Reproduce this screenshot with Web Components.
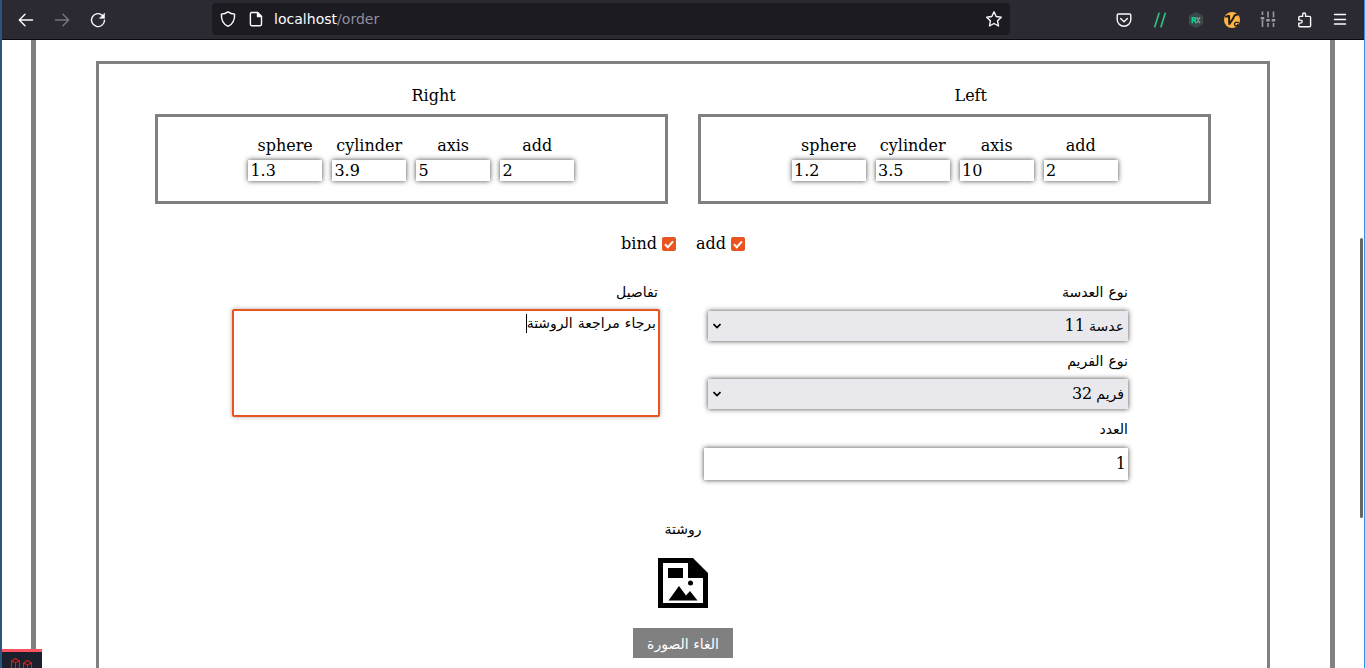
<!DOCTYPE html>
<html lang="ar">
<head>
<meta charset="utf-8">
<title>Order</title>
<style>
html,body{margin:0;height:100%;overflow:hidden;background:#fff}
body{font:16px/19px "DejaVu Serif","DejaVu Sans",serif;color:#000;--ar:14px/19px "DejaVu Sans",sans-serif;--shadow:0 0 5px #444}
</style>
</head>
<body>
<order-window></order-window>
<script>
function define(name, html) {
  const t = document.createElement('template');
  t.innerHTML = html;
  customElements.define(name, class extends HTMLElement {
    constructor() {
      super();
      this.attachShadow({mode: 'open'}).append(t.content.cloneNode(true));
    }
  });
}

define('browser-bar', `
<style>
:host{display:flex;box-sizing:border-box;height:40px;background:#2b2a33;border-bottom:1px solid #0c0c0d;align-items:center;color:#fbfbfe;font:14.05px/20px "DejaVu Sans",sans-serif;padding:0 14px 0 14px}
svg{display:block;flex:none;fill:none;stroke:#fbfbfe;stroke-width:1.4;stroke-linecap:round;stroke-linejoin:round}
.nav{display:flex;gap:16px;width:196px}
.url{display:flex;align-items:center;box-sizing:border-box;width:798px;height:32px;border-radius:4px;background:#1c1b22;padding:0 6px;margin-top:-1px}
.url svg+svg{margin-left:8px}
.url span{margin-left:8px;flex:1;white-space:nowrap}
i{font-style:normal;color:#8f8f9d}
.ext{display:flex;gap:16px;margin-left:auto}
</style>
<div class="nav">
<svg width="20" height="20" viewBox="0 0 20 20"><path d="M16.500 10H3.500M9 4.300L3.300 10 9 15.700"/></svg>
<svg width="20" height="20" viewBox="0 0 20 20" style="stroke:#77767f"><path d="M3.500 10h13M11 4.300l5.700 5.700-5.700 5.700"/></svg>
<svg width="20" height="20" viewBox="0 0 20 20"><path d="M16.500 10.200a6.500 6.500 0 1 1-2-4.800"/><path d="M16.500 3.500v4.800h-4.800z" fill="#fbfbfe" stroke-width=".6"/></svg>
</div>
<div class="url">
<svg width="20" height="20" viewBox="0 0 20 20"><path d="M10 2.800c2.200 1.500 4.200 2.100 6.600 2.300.3 5.500-1.600 10-6.600 12.300C5 15.100 3.100 10.600 3.400 5.100 5.800 4.900 7.800 4.300 10 2.800z"/></svg>
<svg width="20" height="20" viewBox="0 0 20 20"><path d="M5.700 3.500h5.800l4 4v7.800q0 1.400-1.400 1.400H5.700q-1.300 0-1.300-1.400V4.900q0-1.400 1.300-1.400z"/><path d="M11.500 3.500v4h4z" fill="#fbfbfe"/></svg>
<span>localhost<i>/order</i></span>
<svg width="20" height="20" viewBox="0 0 20 20"><path d="M10 2.800l2.200 4.700 5.100.7-3.700 3.600.9 5.200-4.500-2.500L5.500 17l.9-5.200-3.700-3.600 5.100-.7z"/></svg>
</div>
<div class="ext">
<svg width="20" height="20" viewBox="0 0 20 20"><path d="M4.500 4h11q1.300 0 1.300 1.300v4.200a6.800 6.800 0 0 1-13.600 0V5.300Q3.200 4 4.500 4z"/><path d="M6.600 8.500L10 11.700l3.400-3.200"/></svg>
<svg width="20" height="20" viewBox="0 0 20 20" style="stroke:#2dc77d;stroke-width:1.600"><path d="M9 3.200L4.800 16.800M15.200 3.200L11 16.800"/></svg>
<svg width="20" height="20" viewBox="0 0 20 20"><path d="M10 2.500l6.600 3.700v7.600L10 17.500l-6.600-3.700V6.200z" fill="#3a4745" stroke="#46514f" stroke-width=".8"/><g stroke-width="1.400"><path d="M6.200 12.700V7.700h2.100q1.400 0 1.400 1.300t-1.400 1.300H6.200M8.300 10.300l1.500 2.400" stroke="#00d9a0"/><path d="M10.800 7.700l2.900 5M13.700 7.700l-2.900 5" stroke="#819b98"/></g></svg>
<svg width="20" height="20" viewBox="0 0 20 20"><circle cx="10" cy="10" r="8" fill="#ffb444" stroke="none"/><path d="M4 6.600l3-.9.300 8.300Q11 9.500 12.800 5.200l2.700-.6" stroke="#24201b" stroke-width="2"/><path d="M16.400 12.700q-3.400-1.500-4 1.300.1 2 2.200 2 1.500 0 1-1.400" stroke="#24201b" stroke-width="1.300"/></svg>
<svg width="20" height="20" viewBox="0 0 20 20" style="stroke:#9b9aa0;stroke-width:1.600;stroke-linecap:butt"><path d="M4.500 1.500v3.500M4.500 10v7M10 1.500v6M10 13v4M15.500 1.500v6M15.500 13v4"/><path d="M2.700 8.200h3.600M8.200 10.200h3.600M13.700 10.200h3.600" stroke-width="2.600"/></svg>
<svg width="20" height="20" viewBox="0 0 20 20"><path d="M4.800 7.500q0-1.100 1.100-1.100h2.700V4.700q0-1.700 1.500-1.700t1.500 1.700v1.700h3.800q1.200 0 1.200 1.200v8.100q0 1.100-1.200 1.100H5.900q-1.100 0-1.100-1.100v-2.600h1.800q1.600-.1 1.600-1.500t-1.600-1.500H4.800z"/></svg>
<svg width="20" height="20" viewBox="0 0 20 20"><path d="M4.500 4.500h11M4.500 9.500h11M4.500 14h11"/></svg>
</div>`);

define('rx-field', `
<style>
:host{display:block;width:74.5px;text-align:center;white-space:nowrap}
.v{box-sizing:border-box;height:21px;margin-top:5px;padding-left:2.500px;text-align:left;line-height:21px;box-shadow:var(--shadow);background:#fff}
</style>
<div><slot name="label"></slot></div><div class="v"><slot></slot></div>`);

define('eye-panel', `
<style>
:host{display:block;width:513px}
.t{padding-left:50%;height:19px}
.b{box-sizing:border-box;height:90px;margin-top:9px;border:3px solid gray;padding:19px 0 0 var(--inset,89.9px);display:flex;gap:9.5px}
</style>
<div class="t"><slot name="title"></slot></div><div class="b"><slot></slot></div>`);

define('check-item', `
<style>
:host{display:flex;align-items:center;gap:5px}
svg{display:block;margin-top:1px}
</style>
<slot></slot><svg width="14" height="14" viewBox="0 0 14 14"><rect width="14" height="14" rx="2" fill="#e95420"/><path d="M3 7.300l2.800 2.900L11 4.300" fill="none" stroke="#fff" stroke-width="2"/></svg>`);

define('form-label', `
<style>:host{display:block;direction:rtl;font:var(--ar);word-spacing:.6px;height:19px;white-space:nowrap}</style><slot></slot>`);

define('select-box', `
<style>
:host{display:flex;direction:rtl;align-items:center;justify-content:space-between;box-sizing:border-box;width:420px;height:30px;background:#e9e9ed;box-shadow:var(--shadow);padding:0 4px 0 5px;margin-left:4px}
.a{font:var(--ar)}
.s{word-spacing:-1px}
</style>
<span class="s"><span class="a"><slot></slot></span> <slot name="n"></slot></span><svg width="8" height="6" viewBox="0 0 8 6"><path d="M.5 1L4 4.500 7.500 1" fill="none" stroke="#000" stroke-width="1.700"/></svg>`);

define('number-box', `
<style>:host{display:block;box-sizing:border-box;direction:rtl;height:32px;line-height:31px;background:#fff;box-shadow:var(--shadow);padding-right:2px}</style><slot></slot>`);

define('note-box', `
<style>
:host{display:flex;direction:rtl;box-sizing:border-box;width:428px;height:108px;border:2px solid #e95420;border-radius:2px;background:#fff;box-shadow:0 0 4px #aaa;padding:2px 2px}
span{height:19px;margin-top:1px;font:var(--ar);word-spacing:.6px;white-space:nowrap;border-left:1px solid #000}
</style>
<span><slot></slot></span>`);

define('image-upload', `
<style>
:host{display:flex;flex-direction:column;align-items:center}
svg{display:block;margin-top:19px}
.btn{width:100px;height:30px;margin-top:20px;background:gray;color:#fff;text-align:center;font:var(--ar);line-height:33px;direction:rtl;white-space:nowrap}
</style>
<form-label><slot name="label"></slot></form-label>
<svg width="50" height="50" viewBox="0 0 50 50"><path fill-rule="evenodd" d="M0 0h35l15 15v35H0zM5 5v40h40V20H30V5z"/><path d="M10 10h15v10H10zM10.500 42.500L21 28l7 9.500 4-4.500 7.500 9.500z"/><circle cx="32.500" cy="25" r="2.500"/></svg>
<div class="btn"><slot></slot></div>`);

define('devtools-tab', `
<style>
:host{position:absolute;left:0;bottom:0;width:40px;height:19px;box-sizing:border-box;border-top:3px solid #f85362;background:#1a202c}
svg{display:block}
</style>
<svg width="40" height="16" viewBox="0 0 40 16" fill="none" stroke="#c8231d" stroke-width="1.100"><path d="M9.500 9l4-2.500 4 2.500v8h-8zM9.500 9l4 1.500 4-1.500M13.500 10.500V17M21.500 11l4-2.500 4 2.500v6h-8zM21.500 11l4 2 4-2M25.500 13v4"/></svg>`);

define('order-window', `
<style>
:host{display:block;position:relative;box-sizing:border-box;width:1365px;height:668px;overflow:hidden;border-left:2px solid #285681;border-right:1px solid #3296e8}
.page{box-sizing:border-box;width:1304px;height:628px;margin-left:29px;border:solid gray;border-width:0 5px;padding:21px 60px 0}
.card{box-sizing:border-box;height:620px;border:3px solid gray;padding:22px 56px 0}
.eyes{display:flex;gap:30px}
.left{--inset:90.5px}
.checks{display:flex;justify-content:center;gap:20px;margin-top:30px}
.form{display:flex;justify-content:space-between;width:896px;margin:30px 0 0 77px}
.notes{width:428px}.notes note-box{margin-top:7px}.notes form-label{margin-right:2px}
.kind{width:424px}
.kind select-box{margin-top:9px;margin-bottom:11px}.kind select-box+form-label+select-box{margin-top:8px}.kind number-box{margin-top:9px}
image-upload{margin-top:40px}
.thumb{position:absolute;right:1px;top:238px;width:3px;height:280px;border-radius:2px;background:#666}
</style>
<browser-bar></browser-bar>
<div class="page"><div class="card">
<div class="eyes">
<eye-panel><span slot="title">Right</span>
<rx-field><span slot="label">sphere</span>1.3</rx-field><rx-field><span slot="label">cylinder</span>3.9</rx-field><rx-field><span slot="label">axis</span>5</rx-field><rx-field><span slot="label">add</span>2</rx-field></eye-panel>
<eye-panel class="left"><span slot="title">Left</span>
<rx-field><span slot="label">sphere</span>1.2</rx-field><rx-field><span slot="label">cylinder</span>3.5</rx-field><rx-field><span slot="label">axis</span>10</rx-field><rx-field><span slot="label">add</span>2</rx-field></eye-panel>
</div>
<div class="checks"><check-item>bind</check-item><check-item>add</check-item></div>
<div class="form">
<div class="notes"><form-label>تفاصيل</form-label><note-box>برجاء مراجعة الروشتة</note-box></div>
<div class="kind"><form-label>نوع العدسة</form-label><select-box>عدسة<span slot="n">11</span></select-box>
<form-label>نوع الفريم</form-label><select-box>فريم<span slot="n">32</span></select-box>
<form-label>العدد</form-label><number-box>1</number-box></div>
</div>
<image-upload><span slot="label">روشتة</span>الغاء الصورة</image-upload>
</div></div>
<div class="thumb"></div>
<devtools-tab></devtools-tab>`);
</script>
</body>
</html>
